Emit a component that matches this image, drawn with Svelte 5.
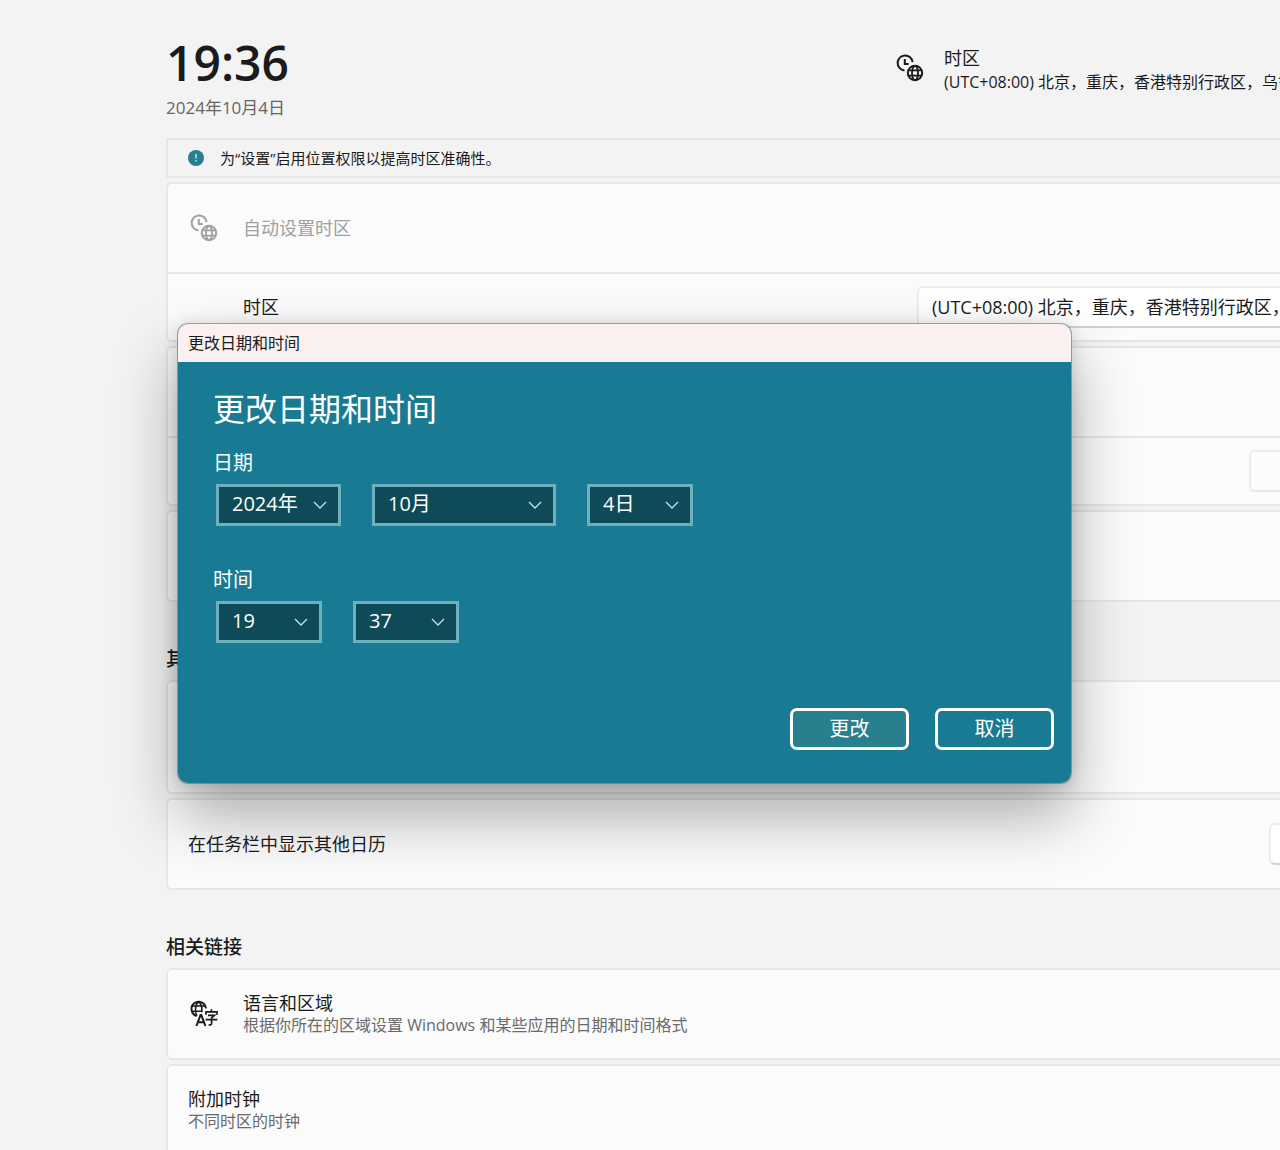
<script lang="ts">
  interface Picker {
    id: string;
    label: string;
    value: string;
    size: string;
  }

  const zone = '(UTC+08:00) 北京，重庆，香港特别行政区，乌鲁木齐';

  const datePickers: Picker[] = [
    { id: 'year', label: '年', value: '2024年', size: 'medium' },
    { id: 'month', label: '月', value: '10月', size: 'large' },
    { id: 'day', label: '日', value: '4日', size: 'small' },
  ];

  const timePickers: Picker[] = [
    { id: 'hour', label: '小时', value: '19', size: 'small' },
    { id: 'minute', label: '分钟', value: '37', size: 'small' },
  ];

  let open = $state(true);

  function close() {
    open = false;
  }
</script>

<svelte:head>
  <title>日期和时间</title>
</svelte:head>

{#snippet clockGlobe()}
  <svg class="icon" viewBox="0 0 28 28" fill="none" stroke="currentColor" stroke-width="2" aria-hidden="true">
    <path d="M8.4 16.4A7.5 7.5 0 1 1 16.6 8.2" />
    <path d="M8.8 5v5h3.8" />
    <circle cx="19" cy="19" r="7.2" />
    <ellipse cx="19" cy="19" rx="3" ry="7.2" stroke-width="1.8" />
    <path d="M12 16.4h14M12 21.6h14" stroke-width="1.8" />
  </svg>
{/snippet}

{#snippet pickers(list: Picker[])}
  <div class="pickers">
    {#each list as p (p.id)}
      <div class="picker {p.size}">
        <select id={p.id} aria-label={p.label}>
          <option>{p.value}</option>
        </select>
        <svg class="chevron" viewBox="0 0 14 8" fill="none" stroke="currentColor" aria-hidden="true">
          <path d="M1 1l6 6 6-6" stroke-width="1.3" />
        </svg>
      </div>
    {/each}
  </div>
{/snippet}

<div class="window">
  <main class="page">
    <header class="top">
      <div>
        <h1>19:36</h1>
        <p class="date">2024年10月4日</p>
      </div>
      <div class="zone">
        {@render clockGlobe()}
        <div>
          <p class="zone-title">时区</p>
          <p class="zone-value">{zone}</p>
        </div>
      </div>
    </header>

    <div class="stack">
      <div class="info-bar">
        <svg class="info-icon" viewBox="0 0 16 16" aria-hidden="true">
          <circle cx="8" cy="8" r="8" fill="#25808f" />
          <path d="M8 4v4.6M8 10v1.6" stroke="#c5e6ec" stroke-width="1.5" />
        </svg>
        <span>为“设置”启用位置权限以提高时区准确性。</span>
      </div>

      <section class="card">
        <div class="row disabled">
          {@render clockGlobe()}
          <span>自动设置时区</span>
        </div>
        <div class="row sub">
          <label for="zone">时区</label>
          <select id="zone" class="field zone-select">
            <option>{zone}</option>
          </select>
        </div>
      </section>

      <section class="card">
        <div class="row"></div>
        <div class="row sub">
          <button class="field plain" aria-label="更改"></button>
        </div>
      </section>

      <section class="card">
        <div class="row"></div>
      </section>
    </div>

    <h2>其他设置</h2>
    <div class="stack">
      <section class="card">
        <div class="row tall"></div>
      </section>
      <section class="card">
        <div class="row">
          <label for="calendar">在任务栏中显示其他日历</label>
          <select id="calendar" class="field calendar-select"></select>
        </div>
      </section>
    </div>

    <h2>相关链接</h2>
    <div class="stack">
      <a class="card" href="#language">
        <div class="row">
          <svg class="icon" viewBox="0 0 28 28" fill="none" stroke="currentColor" stroke-width="2" aria-hidden="true">
            <path d="M6.6 16A7.3 7.3 0 1 1 16 8.4" />
            <path d="M8.6 1.8C4.8 4 4.8 13 7 16M8.6 1.8c2.2 1.6 3.2 4.2 3.2 7v3.4M1.6 6h14M1.6 11.2h10.6" stroke-width="1.6" />
            <path d="M6.4 26l4.1-11h.8l4.1 11M8 22.2h5.8" />
            <path d="M16 14.8v-3h11v3M21.4 9.2v2.6M18 15.4h6.4l-2.8 2.4v5.8q0 1.6-3 1.2M15.6 19.6h11.8" stroke-width="1.7" />
          </svg>
          <div>
            <p class="title">语言和区域</p>
            <p class="desc">根据你所在的区域设置 Windows 和某些应用的日期和时间格式</p>
          </div>
        </div>
      </a>
      <a class="card" href="#clocks">
        <div class="row">
          <div>
            <p class="title">附加时钟</p>
            <p class="desc">不同时区的时钟</p>
          </div>
        </div>
      </a>
    </div>
  </main>

  {#if open}
    <div class="dialog" role="dialog" aria-labelledby="dialog-title">
      <div class="title-bar">更改日期和时间</div>
      <form class="dialog-body" onsubmit={close}>
        <h3 id="dialog-title">更改日期和时间</h3>
        <fieldset>
          <legend>日期</legend>
          {@render pickers(datePickers)}
        </fieldset>
        <fieldset>
          <legend>时间</legend>
          {@render pickers(timePickers)}
        </fieldset>
        <div class="actions">
          <button type="submit" class="primary">更改</button>
          <button type="button" onclick={close}>取消</button>
        </div>
      </form>
    </div>
  {/if}
</div>

<style>
  .window {
    position: relative;
    height: 100vh;
    overflow: hidden;
    background: #f3f3f3;
    color: #1b1b1b;
    font-family: 'Open Sans', 'Noto Sans CJK SC', sans-serif;
    font-size: 18px;
    line-height: 24px;
  }

  h1, h2, h3, p {
    margin: 0;
  }

  select, button {
    box-sizing: border-box;
    margin: 0;
    font: inherit;
    color: inherit;
    appearance: none;
  }

  /* the page runs on past the right edge of the window */
  .page {
    margin: 0 -120px 0 166px;
    padding-top: 32px;
  }

  .top {
    display: flex;
    justify-content: space-between;
    height: 106px;
  }

  h1 {
    font-size: 48px;
    line-height: 62px;
    font-weight: 600;
  }

  .date {
    font-size: 17px;
    line-height: 28px;
    color: #666;
  }

  .zone {
    display: flex;
    gap: 20px;
    width: 504px;
    padding-top: 14px;
  }

  .zone .icon {
    margin-top: 8px;
  }

  .zone-value {
    font-size: 16px;
    white-space: nowrap;
  }

  .icon {
    flex: none;
    width: 28px;
    height: 28px;
  }

  .stack {
    display: flex;
    flex-direction: column;
    gap: 4px;
  }

  .info-bar {
    box-sizing: border-box;
    display: flex;
    align-items: center;
    gap: 16px;
    height: 40px;
    padding-left: 20px;
    border: 2px solid #e7e7e7;
    font-size: 15px;
  }

  .info-icon {
    width: 16px;
    height: 16px;
  }

  .card {
    display: block;
    border: 2px solid #e7e7e7;
    border-radius: 6px;
    background: #fbfbfb;
    color: inherit;
    text-decoration: none;
  }

  .row {
    box-sizing: border-box;
    display: flex;
    align-items: center;
    gap: 23px;
    min-height: 88px;
    padding: 0 20px;
  }

  .row .icon {
    margin: 0 2px;
  }

  .row.tall {
    min-height: 110px;
  }

  .row.sub {
    min-height: 68px;
    padding-left: 75px;
    border-top: 2px solid #e7e7e7;
  }

  .disabled {
    color: #a0a0a0;
  }

  .field {
    height: 42px;
    margin-left: auto;
    padding: 0 13px;
    border: 2px solid #ececec;
    border-bottom-color: #d2d2d2;
    border-radius: 6px;
    background: #fff;
  }

  .zone-select {
    width: 461px;
  }

  .plain {
    width: 129px;
    border-bottom-color: #e7e7e7;
    background: #fcfcfc;
  }

  .calendar-select {
    width: 109px;
  }

  h2 {
    padding: 45px 0 9px;
    font-size: 19px;
    line-height: 24px;
    font-weight: 500;
  }

  .title {
    line-height: 22px;
  }

  .desc {
    font-size: 16px;
    line-height: 22px;
    color: #6a6a6a;
  }

  .dialog {
    position: absolute;
    top: 323px;
    left: 177px;
    width: 893px;
    border: 1px solid rgba(90, 90, 90, 0.5);
    border-radius: 11px;
    background: #197b93;
    background-clip: padding-box;
    box-shadow: 0 32px 64px rgba(0, 0, 0, 0.32), 0 2px 16px rgba(0, 0, 0, 0.14);
    color: #fff;
  }

  .title-bar {
    height: 38px;
    padding-left: 10px;
    border-radius: 10px 10px 0 0;
    background: #f9f0ef;
    color: #1b1b1b;
    font-size: 16px;
    line-height: 38px;
  }

  .dialog-body {
    padding: 26px 17px 33px 35px;
  }

  h3 {
    margin-bottom: 17px;
    font-size: 32px;
    line-height: 42px;
    font-weight: 400;
  }

  fieldset {
    min-width: 0;
    margin: 0 0 38px;
    padding: 0;
    border: 0;
    font-size: 20px;
  }

  legend {
    padding: 0;
    line-height: 32px;
    margin-bottom: 5px;
  }

  .pickers {
    display: flex;
    gap: 31px;
    padding-left: 3px;
  }

  .picker {
    display: grid;
    align-items: center;
  }

  .picker > * {
    grid-area: 1 / 1;
  }

  .picker select {
    width: 100%;
    height: 42px;
    padding: 0 13px 2px;
    border: 3px solid #6eb0be;
    border-radius: 0;
    background: #0f4a58;
  }

  .small {
    width: 106px;
  }

  .medium {
    width: 125px;
  }

  .large {
    width: 184px;
  }

  .chevron {
    justify-self: end;
    width: 14px;
    height: 8px;
    margin-right: 14px;
    color: #c4e3ea;
    pointer-events: none;
  }

  .actions {
    display: flex;
    justify-content: flex-end;
    gap: 26px;
    padding-top: 27px;
  }

  .actions button {
    width: 119px;
    height: 42px;
    padding: 0;
    border: 3px solid #fff;
    border-radius: 7px;
    background: #197b93;
    font-size: 20px;
  }

  .actions .primary {
    background: #28808f;
  }
</style>
